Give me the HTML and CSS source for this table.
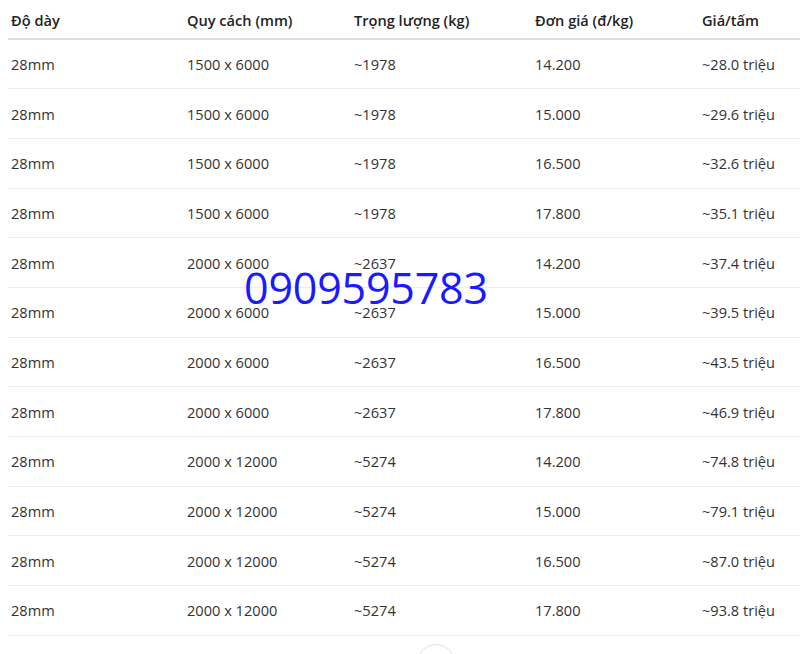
FILE: index.html
```html
<!DOCTYPE html>
<html lang="vi">
<head>
<meta charset="utf-8">
<link rel="stylesheet" href="styles.css">
</head>
<body>
<div class="wrap">
<table class="price">
<thead>
<tr><th class="c1">Độ dày</th><th class="c2">Quy cách (mm)</th><th class="c3">Trọng lượng (kg)</th><th class="c4">Đơn giá (đ/kg)</th><th class="c5">Giá/tấm</th></tr>
</thead>
<tbody>
<tr><td>28mm</td><td>1500 x 6000</td><td>~1978</td><td>14.200</td><td>~28.0 triệu</td></tr>
<tr><td>28mm</td><td>1500 x 6000</td><td>~1978</td><td>15.000</td><td>~29.6 triệu</td></tr>
<tr><td>28mm</td><td>1500 x 6000</td><td>~1978</td><td>16.500</td><td>~32.6 triệu</td></tr>
<tr><td>28mm</td><td>1500 x 6000</td><td>~1978</td><td>17.800</td><td>~35.1 triệu</td></tr>
<tr><td>28mm</td><td>2000 x 6000</td><td>~2637</td><td>14.200</td><td>~37.4 triệu</td></tr>
<tr><td>28mm</td><td>2000 x 6000</td><td>~2637</td><td>15.000</td><td>~39.5 triệu</td></tr>
<tr><td>28mm</td><td>2000 x 6000</td><td>~2637</td><td>16.500</td><td>~43.5 triệu</td></tr>
<tr><td>28mm</td><td>2000 x 6000</td><td>~2637</td><td>17.800</td><td>~46.9 triệu</td></tr>
<tr><td>28mm</td><td>2000 x 12000</td><td>~5274</td><td>14.200</td><td>~74.8 triệu</td></tr>
<tr><td>28mm</td><td>2000 x 12000</td><td>~5274</td><td>15.000</td><td>~79.1 triệu</td></tr>
<tr><td>28mm</td><td>2000 x 12000</td><td>~5274</td><td>16.500</td><td>~87.0 triệu</td></tr>
<tr><td>28mm</td><td>2000 x 12000</td><td>~5274</td><td>17.800</td><td>~93.8 triệu</td></tr>
</tbody>
</table>
<div class="phone">0909595783</div>
</div>
<div class="more"><span class="circle"></span></div>
</body>
</html>
```
FILE: styles.css
```css
html, body { background: #fff; }
body {
  margin: 0 0 0 8px;
  font-family: "Open Sans", "Noto Sans", sans-serif;
  color: #333;
  overflow: hidden;
}
.wrap { position: relative; }
.price {
  border-collapse: collapse;
  width: 792px;
  table-layout: fixed;
  font-size: 14.6px;
}
.price th, .price td {
  box-sizing: border-box;
  text-align: left;
  padding: 0 0 0 3px;
  white-space: nowrap;
}
.price th {
  height: 39px;
  padding-top: 2px;
  font-weight: 600;
  color: #222;
  border-bottom: 2px solid #dedede;
}
.price td {
  height: 49.7px;
  border-bottom: 1px solid #eeeeee;
}
.c1 { width: 176px; }
.c2 { width: 167px; }
.c3 { width: 181px; }
.c4 { width: 167px; }
.c5 { width: 101px; }
.phone {
  position: absolute;
  left: 236px;
  top: 266px;
  font-size: 43px;
  line-height: 1;
  color: #1a1aff;
  letter-spacing: -0.2px;
}
.more {
  padding-top: 8px;
  padding-left: 409px;
}
.circle {
  display: block;
  width: 36px;
  height: 36px;
  border: 1px solid #e2e2e2;
  border-radius: 50%;
}
```
